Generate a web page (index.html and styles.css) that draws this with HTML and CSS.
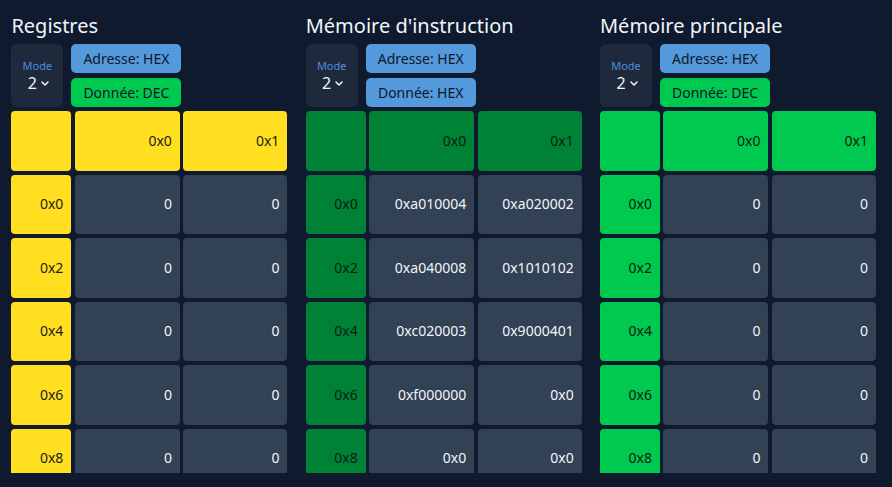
FILE: index.html
```html
<!DOCTYPE html>
<html lang="fr">
<head>
<meta charset="utf-8">
<title>Simulateur</title>
<link rel="stylesheet" href="styles.css">
</head>
<body>
<div class="app">
  <section class="panel">
    <h2 class="title">Registres</h2>
    <div class="controls">
      <div class="mode"><span class="mode-label">Mode</span><span class="mode-value">2 <svg class="chev" width="8" height="5" viewBox="0 0 8 5"><polyline points="1,1 4,4 7,1" fill="none" stroke="currentColor" stroke-width="1.5" stroke-linecap="round" stroke-linejoin="round"/></svg></span></div>
      <div class="toggles">
        <button class="btn blue">Adresse: HEX</button>
        <button class="btn green">Donnée: DEC</button>
      </div>
    </div>
    <div class="grid-wrap">
      <div class="grid yellow">
        <div class="cell key"></div><div class="cell key">0x0</div><div class="cell key">0x1</div>
        <div class="cell key">0x0</div><div class="cell val">0</div><div class="cell val">0</div>
        <div class="cell key">0x2</div><div class="cell val">0</div><div class="cell val">0</div>
        <div class="cell key">0x4</div><div class="cell val">0</div><div class="cell val">0</div>
        <div class="cell key">0x6</div><div class="cell val">0</div><div class="cell val">0</div>
        <div class="cell key">0x8</div><div class="cell val">0</div><div class="cell val">0</div>
      </div>
    </div>
  </section>

  <section class="panel">
    <h2 class="title">Mémoire d'instruction</h2>
    <div class="controls">
      <div class="mode"><span class="mode-label">Mode</span><span class="mode-value">2 <svg class="chev" width="8" height="5" viewBox="0 0 8 5"><polyline points="1,1 4,4 7,1" fill="none" stroke="currentColor" stroke-width="1.5" stroke-linecap="round" stroke-linejoin="round"/></svg></span></div>
      <div class="toggles">
        <button class="btn blue">Adresse: HEX</button>
        <button class="btn blue">Donnée: HEX</button>
      </div>
    </div>
    <div class="grid-wrap">
      <div class="grid dgreen">
        <div class="cell key"></div><div class="cell key">0x0</div><div class="cell key">0x1</div>
        <div class="cell key">0x0</div><div class="cell val">0xa010004</div><div class="cell val">0xa020002</div>
        <div class="cell key">0x2</div><div class="cell val">0xa040008</div><div class="cell val">0x1010102</div>
        <div class="cell key">0x4</div><div class="cell val">0xc020003</div><div class="cell val">0x9000401</div>
        <div class="cell key">0x6</div><div class="cell val">0xf000000</div><div class="cell val">0x0</div>
        <div class="cell key">0x8</div><div class="cell val">0x0</div><div class="cell val">0x0</div>
      </div>
    </div>
  </section>

  <section class="panel">
    <h2 class="title">Mémoire principale</h2>
    <div class="controls">
      <div class="mode"><span class="mode-label">Mode</span><span class="mode-value">2 <svg class="chev" width="8" height="5" viewBox="0 0 8 5"><polyline points="1,1 4,4 7,1" fill="none" stroke="currentColor" stroke-width="1.5" stroke-linecap="round" stroke-linejoin="round"/></svg></span></div>
      <div class="toggles">
        <button class="btn blue">Adresse: HEX</button>
        <button class="btn green">Donnée: DEC</button>
      </div>
    </div>
    <div class="grid-wrap">
      <div class="grid lgreen">
        <div class="cell key"></div><div class="cell key">0x0</div><div class="cell key">0x1</div>
        <div class="cell key">0x0</div><div class="cell val">0</div><div class="cell val">0</div>
        <div class="cell key">0x2</div><div class="cell val">0</div><div class="cell val">0</div>
        <div class="cell key">0x4</div><div class="cell val">0</div><div class="cell val">0</div>
        <div class="cell key">0x6</div><div class="cell val">0</div><div class="cell val">0</div>
        <div class="cell key">0x8</div><div class="cell val">0</div><div class="cell val">0</div>
      </div>
    </div>
  </section>
</div>
</body>
</html>
```

FILE: styles.css
```css
html, body {
  margin: 0;
  padding: 0;
  background: #0f1a2f;
  font-family: "Noto Sans", "DejaVu Sans", sans-serif;
  overflow: hidden;
}

.app {
  display: flex;
  gap: 18.3px;
  padding: 12px 0 0 11.4px;
  height: 487px;
  box-sizing: border-box;
}

.panel {
  width: 276px;
  display: flex;
  flex-direction: column;
}

.title {
  margin: 0 0 4px 0;
  font-size: 20px;
  line-height: 28px;
  font-weight: 400;
  color: #f1f5f9;
  white-space: nowrap;
}

.controls {
  display: flex;
  gap: 8px;
  margin-bottom: 4.5px;
}

.mode {
  width: 52px;
  background: #1e293b;
  border-radius: 6px;
  display: flex;
  flex-direction: column;
  align-items: center;
  justify-content: center;
}

.mode-label {
  font-size: 11px;
  line-height: 15px;
  color: #4d8fdb;
}

.mode-value {
  font-size: 16px;
  line-height: 20px;
  color: #f1f5f9;
  display: flex;
  align-items: center;
  gap: 4px;
  padding-left: 2px;
}

.chev {
  color: #f1f5f9;
  margin-top: 1px;
}

.toggles {
  display: flex;
  flex-direction: column;
  gap: 4.7px;
}

.btn {
  height: 29px;
  padding: 0 12px;
  border: 0;
  border-radius: 5px;
  font-family: inherit;
  font-size: 14px;
  color: #0f172a;
  text-align: center;
  cursor: pointer;
}

.btn.blue { background: #5499db; }
.btn.green { background: #00c950; }

.grid-wrap {
  height: 362px;
  overflow: hidden;
}

.grid {
  display: grid;
  grid-template-columns: 60px 105px 104px;
  column-gap: 3.5px;
  row-gap: 4px;
  grid-auto-rows: 59.5px;
}

.cell {
  border-radius: 4px;
  display: flex;
  align-items: center;
  justify-content: flex-end;
  padding-right: 8px;
  font-size: 14px;
  line-height: 20px;
}

.cell.val {
  background: #334155;
  color: #f1f5f9;
}

.yellow .key { background: #ffdf20; color: #1e1b16; }
.dgreen .key { background: #008236; color: #08200f; }
.lgreen .key { background: #00c950; color: #08200f; }
```
